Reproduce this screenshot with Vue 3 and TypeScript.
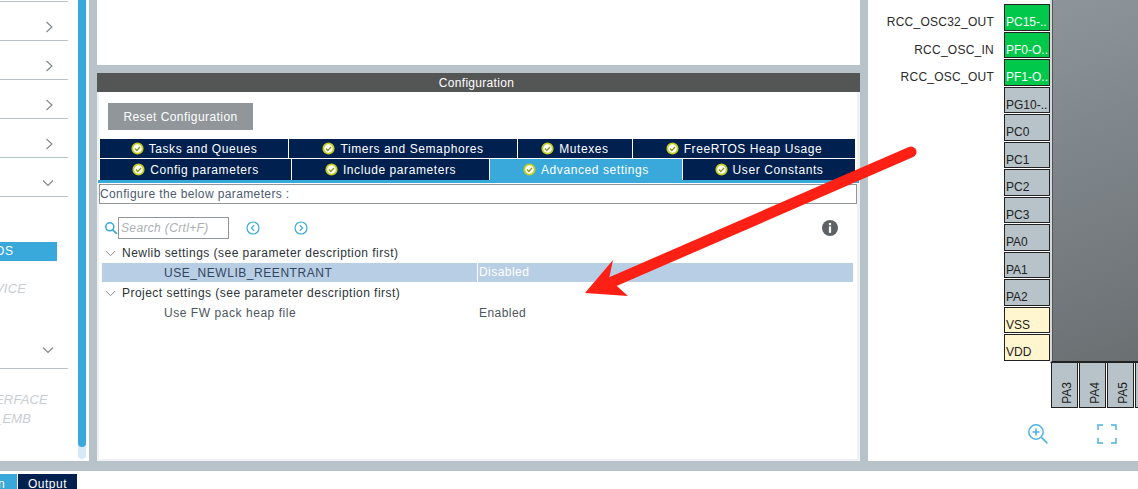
<script setup lang="ts">
const leftRows = [0, 1, 2, 3]
const tabsTop = ['Tasks and Queues', 'Timers and Semaphores', 'Mutexes', 'FreeRTOS Heap Usage']
const tabsBottom = ['Config parameters', 'Include parameters', 'Advanced settings', 'User Constants']
const labels = ['RCC_OSC32_OUT', 'RCC_OSC_IN', 'RCC_OSC_OUT']
const pins = [
  { n: 'PC15-..', k: 'on' }, { n: 'PF0-O..', k: 'on' }, { n: 'PF1-O..', k: 'on' },
  { n: 'PG10-..', k: '' }, { n: 'PC0', k: '' }, { n: 'PC1', k: '' }, { n: 'PC2', k: '' }, { n: 'PC3', k: '' },
  { n: 'PA0', k: '' }, { n: 'PA1', k: '' }, { n: 'PA2', k: '' }, { n: 'VSS', k: 'pwr' }, { n: 'VDD', k: 'pwr' },
]
const bottomPins = ['PA3', 'PA4', 'PA5', '']
</script>

<template>
  <div class="app">
    <div class="main">
      <aside class="left">
        <div class="nav">
          <div class="nav-top"></div>
          <div v-for="r in leftRows" :key="r" class="nav-row">
            <svg width="9" height="12" viewBox="0 0 9 12"><path d="M1.5 1l5.5 5-5.5 5" fill="none" stroke="#7d8488" stroke-width="1.1" /></svg>
          </div>
          <div class="nav-row">
            <svg width="12" height="8" viewBox="0 0 12 8"><path d="M1 1.5l5 5 5-5" fill="none" stroke="#7d8488" stroke-width="1.1" /></svg>
          </div>
          <div class="nav-sel">OS</div>
          <div class="nav-dim vice">VICE</div>
          <div class="nav-row nav-last">
            <svg width="12" height="8" viewBox="0 0 12 8"><path d="M1 1.5l5 5 5-5" fill="none" stroke="#7d8488" stroke-width="1.1" /></svg>
          </div>
          <div class="nav-dim erface">ERFACE</div>
          <div class="nav-dim emb">_EMB</div>
        </div>
        <div class="scroll"><div class="thumb"></div></div>
      </aside>

      <section class="center">
        <div class="blank"></div>
        <div class="pane">
          <div class="head">Configuration</div>
          <button class="reset">Reset Configuration</button>
          <div class="tabs top">
            <div v-for="t in tabsTop" :key="t" class="tab">
              <svg class="ok" width="13" height="13" viewBox="0 0 13 13"><circle cx="6.5" cy="6.5" r="5.2" fill="#fff" stroke="#c3cc1c" stroke-width="1.8" /><path d="M4 6.6l1.8 1.8L9 5" fill="none" stroke="#8f9a1a" stroke-width="1.4" /></svg>{{ t }}
            </div>
          </div>
          <div class="tabs lower">
            <div v-for="t in tabsBottom" :key="t" class="tab" :class="{ active: t === 'Advanced settings' }">
              <svg class="ok" width="13" height="13" viewBox="0 0 13 13"><circle cx="6.5" cy="6.5" r="5.2" fill="#fff" stroke="#c3cc1c" stroke-width="1.8" /><path d="M4 6.6l1.8 1.8L9 5" fill="none" stroke="#8f9a1a" stroke-width="1.4" /></svg>{{ t }}
            </div>
          </div>
          <div class="rule"></div>
          <div class="note">Configure the below parameters :</div>
          <div class="tools">
            <svg class="glass" width="14" height="14" viewBox="0 0 14 14"><circle cx="5.8" cy="5.8" r="4" fill="none" stroke="#39a9dc" stroke-width="1.6" /><path d="M8.8 8.8l4 4" stroke="#39a9dc" stroke-width="1.8" /></svg>
            <div class="search">Search (Crtl+F)</div>
            <svg class="prev" width="14" height="14" viewBox="0 0 14 14"><circle cx="7" cy="7" r="6" fill="none" stroke="#39a9dc" stroke-width="1.2" /><path d="M8.2 4.2L5.4 7l2.8 2.8" fill="none" stroke="#39a9dc" stroke-width="1.2" /></svg>
            <svg class="next" width="14" height="14" viewBox="0 0 14 14"><circle cx="7" cy="7" r="6" fill="none" stroke="#39a9dc" stroke-width="1.2" /><path d="M5.8 4.2L8.6 7l-2.8 2.8" fill="none" stroke="#39a9dc" stroke-width="1.2" /></svg>
            <svg class="info" width="16" height="16" viewBox="0 0 16 16"><circle cx="8" cy="8" r="8" fill="#5f6264" /><rect x="6.9" y="3" width="2.2" height="2.2" fill="#fff" /><rect x="6.9" y="6.4" width="2.2" height="6.4" fill="#fff" /></svg>
          </div>
          <div class="tree">
            <div class="group"><svg width="11" height="7" viewBox="0 0 11 7"><path d="M.8 1l4.7 4.7L10.2 1" fill="none" stroke="#858b8f" stroke-width="1" /></svg>Newlib settings (see parameter description first)</div>
            <div class="param sel"><span class="pname">USE_NEWLIB_REENTRANT</span><span class="pval">Disabled</span></div>
            <div class="group"><svg width="11" height="7" viewBox="0 0 11 7"><path d="M.8 1l4.7 4.7L10.2 1" fill="none" stroke="#858b8f" stroke-width="1" /></svg>Project settings (see parameter description first)</div>
            <div class="param"><span class="pname">Use FW pack heap file</span><span class="pval">Enabled</span></div>
          </div>
        </div>
      </section>

      <section class="right">
        <div class="labels">
          <div v-for="l in labels" :key="l" class="label">{{ l }}</div>
        </div>
        <div class="pins">
          <div v-for="p in pins" :key="p.n" class="pin" :class="p.k">{{ p.n }}</div>
        </div>
        <div class="chip-wrap">
          <div class="chip"></div>
          <div class="bpins">
            <div v-for="(p, i) in bottomPins" :key="i" class="bpin"><span>{{ p }}</span></div>
          </div>
          <div class="zoomers">
            <svg width="22" height="22" viewBox="0 0 22 22"><circle cx="9" cy="9" r="7.2" fill="none" stroke="#4db3e4" stroke-width="1.5" /><path d="M9 5.5v7M5.5 9h7" stroke="#4db3e4" stroke-width="1.6" /><path d="M14.4 14.4l6 6" stroke="#4db3e4" stroke-width="1.5" /></svg>
            <svg width="20" height="20" viewBox="0 0 20 20"><path d="M1 6V1h5M14 1h5v5M19 14v5h-5M6 19H1v-5" fill="none" stroke="#4db3e4" stroke-width="1.5" /></svg>
          </div>
        </div>
      </section>
    </div>

    <div class="gray-bar"></div>
    <div class="footer">
      <div class="btab on">n</div>
      <div class="btab">Output</div>
    </div>

    <svg class="arrow" width="1138" height="489" viewBox="0 0 1138 489">
      <path d="M911 152L612 282" stroke="#ff2015" stroke-width="11" stroke-linecap="round" fill="none" />
      <path d="M585 293L613 260L609 279L628 296Z" fill="#ff2015" />
    </svg>
  </div>
</template>

<style>
html, body { margin: 0; background: #fff; }
</style>

<style scoped>
.app {
  position: relative;
  width: 1138px;
  height: 489px;
  overflow: hidden;
  font-family: "Liberation Sans", Arial, sans-serif;
  font-size: 12px;
  display: flex;
  flex-direction: column;
  background: #fff;
}
.main { display: flex; height: 461px; flex: none; }
.left { width: 89px; display: flex; background: #fff; flex: none; }
.nav { width: 78px; position: relative; overflow: hidden; }
.nav-top { height: 1px; margin-top: 1px; width: 68px; background: #b7c2c9; }
.nav-row {
  width: 68px;
  height: 39px;
  border-bottom: 1px solid #b7c2c9;
  display: flex;
  align-items: center;
  justify-content: flex-end;
  padding: 11px 14px 0 0;
  box-sizing: border-box;
}
.nav-sel {
  width: 57px;
  height: 19px;
  margin-top: 45px;
  background: #39a9dc;
  color: #fff;
  font-size: 12px;
  line-height: 19px;
  letter-spacing: 0.6px;
  text-indent: -5px;
}
.nav-dim {
  color: #c7cdd1;
  font-style: italic;
  font-size: 13px;
  line-height: 18px;
  letter-spacing: 0.2px;
  white-space: nowrap;
}
.vice { margin: 19px 0 0 -5px; }
.nav-last { margin-top: 34px; height: 37px; padding: 0 14px 0 0; }
.erface { margin: 22px 0 0 -5px; }
.emb { margin: 1px 0 0 -5px; }
.scroll { width: 8px; background: #d7e9f6; height: 459px; border-radius: 0 0 4px 4px; }
.thumb { height: 447px; background: #39a9dc; border-radius: 0 0 4px 4px; }
.center {
  width: 779px;
  flex: none;
  background: #b7c2c9;
  padding: 0 8px;
  box-sizing: border-box;
  display: flex;
  flex-direction: column;
}
.blank { height: 65px; background: #fff; flex: none; }
.pane {
  margin-top: 8px;
  height: 386px;
  background: #fff;
  border: solid #f0f1f2;
  border-width: 0 3px 2px 2px;
  display: flex;
  flex-direction: column;
}
.head {
  margin: 0 -3px 0 -2px;
  height: 19px;
  padding: 1px 4px 0 0;
  box-sizing: border-box;
  background: #545655;
  color: #fff;
  text-align: center;
  font-size: 12px;
  line-height: 18px;
  letter-spacing: 0.3px;
  flex: none;
}
.reset {
  margin: 11px 0 0 9px;
  width: 145px;
  height: 27px;
  border: 0;
  padding: 0;
  background: #90969a;
  color: #fff;
  font: 12px "Liberation Sans", Arial, sans-serif;
  letter-spacing: 0.43px;
  flex: none;
}
.tabs { display: grid; margin-left: 1px; width: 755px; column-gap: 1px; flex: none; }
.top { margin-top: 9px; height: 19px; grid-template-columns: 188px 228px 114px 222px; }
.lower { margin-top: 1px; height: 21px; grid-template-columns: 191px 197px 192px 172px; }
.tab {
  background: #00204f;
  color: #fff;
  display: flex;
  align-items: center;
  justify-content: center;
  letter-spacing: 0.58px;
  white-space: nowrap;
}
.top .tab { padding-top: 1px; box-sizing: border-box; }
.top .ok { margin-top: -1px; }
.tab.active { background: #39a9dc; }
.ok { margin-right: 5px; flex: none; }
.rule { height: 3px; background: #39a9dc; margin: 0 0 0 -1px; width: 761px; flex: none; }
.note {
  margin-top: 1px;
  height: 20px;
  width: 758px;
  box-sizing: border-box;
  border: 1px solid #90969a;
  color: #4c5b72;
  line-height: 18px;
  letter-spacing: 0.38px;
  white-space: nowrap;
  flex: none;
}
.tools { display: flex; align-items: center; height: 22px; margin-top: 13px; flex: none; }
.glass { margin-left: 5px; flex: none; }
.search {
  width: 111px;
  height: 22px;
  box-sizing: border-box;
  border: 1px solid #90969a;
  color: #aab0b4;
  font-style: italic;
  line-height: 20px;
  padding-left: 2px;
  letter-spacing: 0.35px;
  flex: none;
}
.prev { margin-left: 17px; flex: none; }
.next { margin-left: 34px; flex: none; }
.info { margin-left: auto; margin-right: 19px; flex: none; }
.tree { margin-top: 4px; }
.group {
  height: 20px;
  line-height: 19px;
  color: #2b3338;
  letter-spacing: 0.47px;
  display: flex;
  align-items: center;
  white-space: nowrap;
}
.group svg { margin: 0 6px 0 6px; flex: none; }
.param {
  height: 20px;
  margin-left: 3px;
  width: 751px;
  display: flex;
  align-items: center;
  color: #4c5560;
  letter-spacing: 0.55px;
  white-space: nowrap;
}
.pname { width: 375px; padding-left: 62px; box-sizing: border-box; }
.pval { padding-left: 2px; letter-spacing: 0.45px; }
.param.sel { background: #b8cee5; color: #33465e; height: 19px; margin-bottom: 1px; }
.sel .pval { color: #fff; border-left: 1px solid #fff; height: 100%; line-height: 19px; padding-left: 1px; }
.right { flex: 1; display: flex; background: #fff; position: relative; overflow: hidden; }
.labels { width: 126px; padding-top: 8px; flex: none; }
.label {
  height: 27.5px;
  line-height: 28px;
  text-align: right;
  color: #2a2a2a;
  letter-spacing: 0.25px;
  white-space: nowrap;
}
.pins {
  margin: 4px 0 0 10px;
  width: 46px;
  flex: none;
  display: grid;
  grid-auto-rows: 27.5px;
  align-content: start;
}
.pin {
  box-sizing: border-box;
  border: 1px solid #222;
  background: #b7c2c9;
  color: #222;
  padding-left: 1px;
  line-height: 34px;
  height: 26.5px;
  overflow: hidden;
  white-space: nowrap;
}
.pin.on { background: #00c84a; color: #fff; }
.pin.pwr { background: #fff5cf; }
.chip-wrap { width: 88px; flex: none; display: flex; flex-direction: column; }
.chip {
  height: 363px;
  width: 96px;
  flex: none;
  box-sizing: border-box;
  border-left: 2px solid #d4d8da;
  border-bottom: 2px solid #222;
  box-shadow: inset 1px 0 0 #555;
  background: linear-gradient(160deg, #8d959b 0%, #6a6f72 100%);
}
.bpins { display: flex; margin-left: 1px; gap: 1px; height: 45px; flex: none; }
.bpin {
  width: 27px;
  flex: none;
  box-sizing: border-box;
  border: 1px solid #222;
  border-top: 0;
  background: #b7c2c9;
  display: flex;
  align-items: flex-end;
  justify-content: center;
  padding: 0 0 3px 5px;
}
.bpin span { writing-mode: vertical-rl; transform: rotate(180deg); color: #222; line-height: 1; }
.zoomers {
  position: absolute;
  left: 159px;
  top: 423px;
  display: flex;
  align-items: center;
  gap: 48px;
}
.gray-bar { height: 10px; background: #b7c2c9; flex: none; }
.footer { display: flex; margin-top: 3px; height: 15px; gap: 1px; flex: none; }
.btab {
  background: #00204f;
  color: #fff;
  width: 59px;
  height: 18px;
  text-align: center;
  line-height: 20px;
  letter-spacing: 0.5px;
}
.btab.on { background: #39a9dc; width: 17px; text-align: left; text-indent: -2px; }
.arrow { position: absolute; left: 0; top: 0; pointer-events: none; }
</style>
